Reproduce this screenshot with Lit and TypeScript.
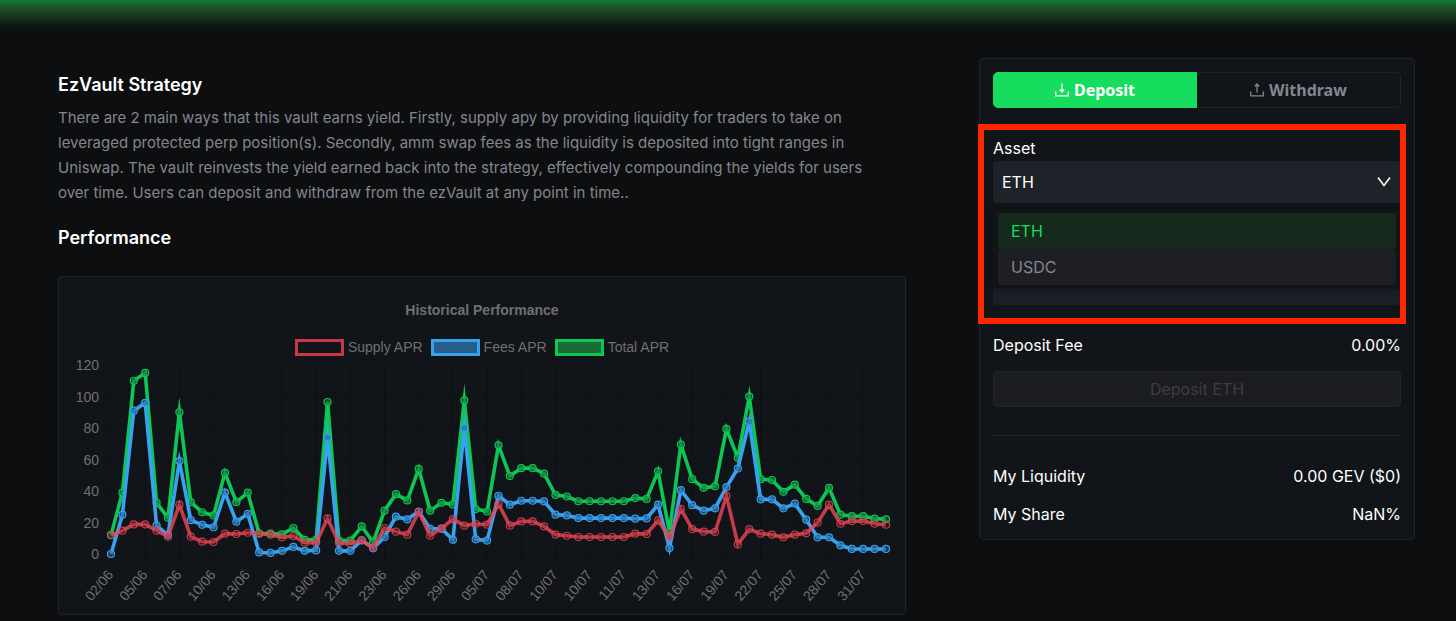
import { LitElement, html, svg, css } from "lit";
import { customElement, state } from "lit/decorators.js";
import { classMap } from "lit/directives/class-map.js";

interface Series {
  key: string;
  label: string;
  values: number[];
}

const TOTAL = [
  12, 39, 110, 115, 32.5, 23, 90, 33, 26.5, 24.5, 51.5, 33, 39, 13, 13, 12.5, 16.5, 9, 9, 96.5, 8.5, 8.5, 17.5,
  7.5, 27.5, 38, 34, 54, 27.5, 32.5, 31.5, 97.5, 28.5, 27, 69, 49.5, 54.5, 54.5, 51, 37.5, 36.5, 33.5, 33.5, 33.5,
  33.5, 33.5, 35.5, 35, 52.5, 14, 69.5, 47.5, 42, 43, 79.5, 61, 100, 47.5, 47, 39.5, 44, 35, 30.5, 42, 25, 24, 24,
  22.5, 22,
];
const FEES = [
  0, 25, 91, 96, 18, 12, 59, 21.5, 18.5, 17, 39, 20.5, 25.5, 1, 0.7, 2, 4.5, 2, 2.3, 74, 2, 2, 8.7, 3.6, 10.8,
  23.7, 22, 27, 16, 16, 9, 80, 9.3, 8.5, 37, 31.3, 33.8, 33.8, 33.4, 25, 24.5, 22.8, 22.8, 22.8, 22.8, 22.8, 22.4,
  22.6, 31.3, 3.8, 40.5, 31, 27.5, 29, 42.5, 54.3, 84, 34.7, 34.7, 29, 32, 21.8, 10.6, 10.6, 5.5, 3.2, 3.2, 3.2, 3.2,
];
const SUPPLY = [
  12, 14.8, 18.8, 18.8, 14.8, 11, 31.3, 11, 7.8, 7.6, 12.9, 12.7, 13.5, 12.9, 12.3, 10.6, 11.4, 7.2, 7.2, 22.6, 7,
  6.6, 8.7, 4, 16.5, 14.2, 12.3, 26.8, 11.6, 16.3, 22.2, 18, 19.2, 18.6, 31.7, 18, 20.7, 20.7, 17.5, 12.3, 11.6,
  10.8, 10.8, 10.8, 10.8, 10.8, 12.9, 12.7, 21.3, 10.6, 28.7, 15.8, 14.2, 14, 36.8, 6.1, 15.8, 12.9, 12.3, 10.6,
  12.3, 13.1, 20, 31.3, 19.2, 20.9, 20.9, 19.2, 18.6,
];
const DATES = [
  "02/06", "05/06", "07/06", "10/06", "13/06", "16/06", "19/06", "21/06", "23/06", "26/06", "29/06", "05/07",
  "08/07", "10/07", "10/07", "11/07", "13/07", "16/07", "19/07", "22/07", "25/07", "28/07", "31/07",
];

const SERIES: Series[] = [
  { key: "supply", label: "Supply APR", values: SUPPLY },
  { key: "fees", label: "Fees APR", values: FEES },
  { key: "total", label: "Total APR", values: TOTAL },
];

@customElement("apr-chart")
export class AprChart extends LitElement {
  static styles = css`
    :host {
      display: block;
      font-family: "Liberation Sans", Arial, sans-serif;
      color: #707070;
    }
    .title {
      margin: 0;
      font-size: 14px;
      line-height: 16px;
      font-weight: 700;
      text-align: center;
    }
    .legend {
      display: flex;
      justify-content: center;
      gap: 8px;
      margin: 20px 0 1px;
      padding: 0;
      list-style: none;
      font-size: 14px;
      line-height: 18px;
    }
    .entry {
      display: flex;
      align-items: center;
      gap: 4px;
    }
    .swatch {
      box-sizing: border-box;
      width: 49px;
      height: 17px;
      border: 3px solid;
    }
    .swatch.supply {
      border-color: #c43a49;
    }
    .swatch.fees {
      border-color: #36a2f0;
      background: #275e8a;
    }
    .swatch.total {
      border-color: #0dc653;
      background: #1a6c37;
    }
    .plot {
      display: block;
      width: 100%;
      height: auto;
    }
    .grid {
      stroke: #0e1114;
      stroke-width: 1;
    }
    .tick {
      fill: #707070;
      font-size: 14px;
    }
    .line {
      fill: none;
      stroke-width: 3.6;
      stroke-miterlimit: 10;
    }
    .dot {
      stroke-width: 1.2;
    }
    .line.total,
    .dot.total {
      stroke: #0dc653;
    }
    .line.fees,
    .dot.fees {
      stroke: #36a2f0;
    }
    .line.supply,
    .dot.supply {
      stroke: rgba(240, 70, 86, 0.8);
    }
    .dot.total {
      fill: rgba(26, 108, 55, 0.5);
    }
    .dot.fees {
      fill: rgba(39, 94, 138, 0.5);
    }
    .dot.supply {
      fill: rgba(17, 20, 24, 0.1);
    }
  `;

  private readonly left = 52;
  private readonly right = 827;
  private readonly top = 8;
  private readonly bottom = 197;

  private x(index: number) {
    return this.left + ((this.right - this.left) * index) / (TOTAL.length - 1);
  }

  private y(value: number) {
    return this.bottom - ((this.bottom - this.top) * value) / 120;
  }

  private renderSeries(series: Series) {
    const points = series.values.map((v, i) => `${this.x(i).toFixed(2)},${this.y(v).toFixed(2)}`).join(" ");
    return svg`
      <polyline class="line ${series.key}" points=${points}></polyline>
      ${series.values.map(
        (v, i) => svg`<circle class="dot ${series.key}" cx=${this.x(i)} cy=${this.y(v)} r="3.5"></circle>`
      )}`;
  }

  render() {
    const levels = [0, 20, 40, 60, 80, 100, 120];
    return html`
      <h3 class="title">Historical Performance</h3>
      <ul class="legend">
        ${SERIES.map((s) => html`<li class="entry"><span class="swatch ${s.key}"></span>${s.label}</li>`)}
      </ul>
      <svg class="plot" viewBox="0 0 846 257" role="img" aria-label="APR by date">
        ${levels.map(
          (l) => svg`
            <line class="grid" x1=${this.left - 8} x2=${this.right} y1=${this.y(l)} y2=${this.y(l)}></line>
            <text class="tick" x="40" y=${this.y(l) + 5} text-anchor="end">${l}</text>`
        )}
        ${DATES.map((d, i) => {
          const x = this.x(i * 3);
          return svg`
            <line class="grid" x1=${x} x2=${x} y1=${this.top} y2=${this.bottom + 8}></line>
            <text class="tick" text-anchor="end" transform="translate(${x + 3} ${this.bottom + 21}) rotate(-50)">${d}</text>`;
        })}
        ${[...SERIES].reverse().map((s) => this.renderSeries(s))}
      </svg>
    `;
  }
}

@customElement("app-root")
export class AppRoot extends LitElement {
  static styles = css`
    :host {
      display: block;
      min-height: 100vh;
      box-sizing: border-box;
      overflow: hidden;
      background: #0d0e10;
      color: #fff;
      font-family: Inter, "Liberation Sans", sans-serif;
      font-size: 16px;
      line-height: 24px;
    }
    * {
      box-sizing: border-box;
    }
    .glow {
      height: 36px;
      border-top: 3px solid #0a7a34;
      background: linear-gradient(#20602f, #1a4726 25%, #13291b 50%, #0e1412 75%, #0d0e10);
    }
    .page {
      display: grid;
      grid-template-columns: minmax(0, 1fr) 436px;
      align-items: start;
      gap: 73px;
      padding: 22px 41px 6px 58px;
    }
    .info {
      padding-top: 13px;
    }
    h2 {
      margin: 0;
      font-size: 18px;
      line-height: 28px;
      font-weight: 600;
    }
    .about {
      margin: 6px 0 19px;
      padding-right: 16px;
      font-size: 15px;
      line-height: 25px;
      color: #83868f;
    }
    .card {
      border: 1px solid #20232a;
      border-radius: 4px;
      background: #111418;
    }
    .chart-card {
      margin-top: 24px;
      padding-top: 25px;
    }
    .panel {
      position: relative;
      padding: 13px;
    }
    .tabs {
      display: grid;
      grid-template-columns: 1fr 1fr;
    }
    .tab {
      display: flex;
      align-items: center;
      justify-content: center;
      gap: 5px;
      height: 36px;
      padding: 0;
      border: 1px solid #20232a;
      background: transparent;
      color: #83868f;
      font: 700 16px/24px "Noto Sans", sans-serif;
    }
    .tab:first-child {
      border-radius: 5px 0 0 5px;
    }
    .tab:last-child {
      border-left: 0;
      border-radius: 0 5px 5px 0;
    }
    .tab.active {
      border-color: #16dd5e;
      background: #16dd5e;
      color: #fff;
    }
    .icon {
      width: 14px;
      height: 14px;
      fill: none;
      stroke: currentColor;
    }
    .asset-label {
      display: block;
      margin-top: 28px;
      line-height: 25px;
    }
    .picker {
      position: relative;
    }
    .select,
    .amount {
      display: block;
      width: 100%;
      height: 42px;
      padding: 0 9px;
      border: 0;
      border-radius: 4px;
      outline: 0;
      appearance: none;
      background: #1e2329;
      color: #fff;
      font: inherit;
    }
    .amount {
      margin-top: 60px;
      background: #1b2026;
    }
    .chevron {
      position: absolute;
      right: 10px;
      top: 15px;
      width: 14px;
      height: 12px;
      fill: none;
      stroke: #fff;
      stroke-width: 1.6;
      pointer-events: none;
    }
    .menu {
      position: absolute;
      left: 0;
      right: 0;
      top: 48px;
      padding: 4px 5px;
      border-radius: 4px;
      background: #131418;
      box-shadow: 0 0 6px rgba(10, 11, 13, 0.5);
    }
    .option {
      display: block;
      width: 100%;
      height: 36px;
      padding: 0 13px;
      border: 0;
      border-radius: 4px;
      background: #1e1f24;
      color: #83868f;
      font: inherit;
      text-align: left;
    }
    .option.chosen {
      background: #15291d;
      color: #16dd5e;
    }
    .highlight {
      position: absolute;
      left: -2px;
      right: 8px;
      top: 65px;
      height: 200px;
      border: 6px solid #ff2600;
      pointer-events: none;
    }
    .row {
      display: flex;
      justify-content: space-between;
      margin: 0;
    }
    .row dd {
      margin: 0;
    }
    .fee {
      margin-top: 28px;
    }
    .submit {
      display: block;
      width: 100%;
      height: 36px;
      margin-top: 14px;
      padding: 0;
      border: 1px solid #222429;
      border-radius: 4px;
      background: #1c1d21;
      color: #3d3e43;
      font: inherit;
    }
    .divider {
      height: 1px;
      margin: 28px 0;
      border: 0;
      background: #20232a;
    }
    .share {
      margin-top: 14px;
    }
  `;

  @state() private asset = "ETH";
  @state() private mode: "deposit" | "withdraw" = "deposit";

  private renderIcon(arrow: string) {
    return html`<svg class="icon" viewBox="0 0 14 14" aria-hidden="true">
      <path stroke-width="1.3" d="M0.7 8.5V12.8H13.3V8.5"></path>
      <path stroke-width="1.3" d=${arrow}></path>
    </svg>`;
  }

  render() {
    return html`
      <div class="glow"></div>
      <main class="page">
        <section class="info">
          <h2>EzVault Strategy</h2>
          <p class="about">
            There are 2 main ways that this vault earns yield. Firstly, supply apy by providing liquidity for traders to
            take on leveraged protected perp position(s). Secondly, amm swap fees as the liquidity is deposited into
            tight ranges in Uniswap. The vault reinvests the yield earned back into the strategy, effectively
            compounding the yields for users over time. Users can deposit and withdraw from the ezVault at any point in
            time..
          </p>
          <h2>Performance</h2>
          <div class="card chart-card"><apr-chart></apr-chart></div>
        </section>

        <aside class="card panel">
          <div class="tabs">
            <button
              class=${classMap({ tab: true, active: this.mode === "deposit" })}
              @click=${() => (this.mode = "deposit")}
            >
              ${this.renderIcon("M7 0.5V8.5M4.8 6.5L7 9L9.2 6.5")}Deposit
            </button>
            <button
              class=${classMap({ tab: true, active: this.mode === "withdraw" })}
              @click=${() => (this.mode = "withdraw")}
            >
              ${this.renderIcon("M7 9.5V1.5M4.8 3.5L7 1L9.2 3.5")}Withdraw
            </button>
          </div>

          <label class="asset-label" for="asset">Asset</label>
          <div class="picker">
            <select
              id="asset"
              class="select"
              .value=${this.asset}
              @change=${(e: Event) => (this.asset = (e.target as HTMLSelectElement).value)}
            >
              <option>ETH</option>
              <option>USDC</option>
            </select>
            <svg class="chevron" viewBox="0 0 14 12" aria-hidden="true"><path d="M1 1.5L7 9.5L13 1.5"></path></svg>
            <div class="menu" role="listbox" aria-label="Asset">
              ${["ETH", "USDC"].map(
                (name) => html`<button
                  class=${classMap({ option: true, chosen: this.asset === name })}
                  role="option"
                  aria-selected=${this.asset === name}
                  @click=${() => (this.asset = name)}
                >
                  ${name}
                </button>`
              )}
            </div>
          </div>
          <input class="amount" type="text" inputmode="decimal" aria-label="Amount" />

          <dl class="row fee"><dt>Deposit Fee</dt><dd>0.00%</dd></dl>
          <button class="submit" disabled>Deposit ${this.asset}</button>
          <hr class="divider" />
          <dl class="row"><dt>My Liquidity</dt><dd>0.00 GEV ($0)</dd></dl>
          <dl class="row share"><dt>My Share</dt><dd>NaN%</dd></dl>
          <div class="highlight"></div>
        </aside>
      </main>
    `;
  }
}
